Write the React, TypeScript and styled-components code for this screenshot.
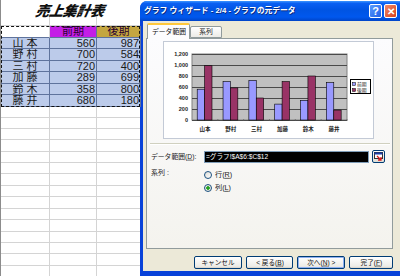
import * as React from 'react'
import styled, { createGlobalStyle } from 'styled-components'

const GlobalStyle = createGlobalStyle`
    body {
        margin: 0;
        font-family: "Liberation Sans", "Noto Sans CJK JP", sans-serif;
    }
`

// grid line positions of the sheet, taken row by row
const lines = [14, 25, 37, 48, 60, 71, 83, 94, 106, 117, 128, 139, 151, 162, 173, 185, 196, 208, 219, 231, 242, 253, 265, 276]
const heights = lines.map((y, i) => (i === 0 ? y + 1 : y - lines[i - 1]))
const colWidths = [49, 47, 44]

const rows = [
    { name: '山 本', a: 560, b: 987 },
    { name: '野 村', a: 700, b: 584 },
    { name: '三 村', a: 720, b: 400 },
    { name: '加 藤', a: 289, b: 699 },
    { name: '鈴 木', a: 358, b: 800 },
    { name: '藤 井', a: 680, b: 180 },
]

const Chart = () => {
    const plotX = 28
    const plotY = 12
    const plotW = 155
    const plotH = 66
    const catW = plotW / 6
    const scale = plotH / 1200
    const ticks = [1200, 1000, 800, 600, 400, 200, 0]

    return (
        <svg width="209" height="96" viewBox="0 0 209 96">
            <rect x={plotX} y={plotY} width={plotW} height={plotH} fill="#c0c0c0" stroke="#808080" strokeWidth="1" />
            {ticks.map((t, k) => (
                <g key={t}>
                    <line x1={plotX} x2={plotX + plotW} y1={plotY + k * 11 + 0.5} y2={plotY + k * 11 + 0.5} stroke="#4a4a4a" strokeWidth="1" />
                    <text x={24} y={plotY + k * 11 + 2} fontSize="5.5" textAnchor="end" fill="#222" fontFamily="Liberation Sans, sans-serif" fontWeight="bold">
                        {t.toLocaleString('en-US')}
                    </text>
                </g>
            ))}
            {rows.map((r, i) => {
                const x0 = plotX + i * catW + 5.2
                const ha = r.a * scale
                const hb = r.b * scale
                return (
                    <g key={r.name}>
                        <rect x={x0} y={plotY + plotH - ha} width={7.4} height={ha} fill="#9999ff" stroke="#000" strokeWidth="0.6" />
                        <rect x={x0 + 7.4} y={plotY + plotH - hb} width={7.4} height={hb} fill="#993366" stroke="#000" strokeWidth="0.6" />
                        <line x1={plotX + (i + 1) * catW} x2={plotX + (i + 1) * catW} y1={plotY + plotH - 1} y2={plotY + plotH + 1} stroke="#555" strokeWidth="0.6" />
                        <text x={plotX + i * catW + catW / 2} y={89} fontSize="5.5" textAnchor="middle" fill="#222" fontWeight="bold" fontFamily="Noto Sans CJK JP, sans-serif">
                            {r.name.replace(' ', '')}
                        </text>
                    </g>
                )
            })}
            <rect x="186.5" y="37.5" width="20" height="14" fill="#fff" stroke="#000" strokeWidth="1" />
            <rect x="188.5" y="40.5" width="3" height="3" fill="#9999ff" stroke="#000" strokeWidth="0.5" />
            <rect x="188.5" y="46.5" width="3" height="3" fill="#993366" stroke="#000" strokeWidth="0.5" />
            <text x="193" y="44" fontSize="4.8" fill="#222" fontFamily="Noto Sans CJK JP, sans-serif">前期</text>
            <text x="193" y="50" fontSize="4.8" fill="#222" fontFamily="Noto Sans CJK JP, sans-serif">後期</text>
        </svg>
    )
}

const RangeIcon = () => (
    <svg width="9" height="9" viewBox="0 0 9 9">
        <rect x="0.5" y="0.5" width="8" height="6" fill="#fff" stroke="#333" strokeWidth="1" />
        <rect x="0.5" y="0.5" width="8" height="2" fill="#1c3fa8" />
        <path d="M3 4 L7 8 M7 5 L7 8 L4 8" stroke="#d81b1b" strokeWidth="1.3" fill="none" />
    </svg>
)

export default () => (
    <>
        <GlobalStyle />
        <Screen>
            <Sheet>
                {heights.map((h, i) => {
                    if (i === 0) {
                        return (
                            <TitleRow key={i} h={h}>
                                <SheetTitle>売上集計表</SheetTitle>
                            </TitleRow>
                        )
                    }
                    if (i === 2) {
                        return (
                            <TableBox key={i}>
                                <SheetRow h={h}>
                                    <Cell w={colWidths[0]} tone="blank" />
                                    <Cell w={colWidths[1]} tone="purple" align="center">前期</Cell>
                                    <Cell w={colWidths[2]} tone="olive" align="center">後期</Cell>
                                </SheetRow>
                                {rows.map((r, k) => (
                                    <SheetRow key={r.name} h={heights[3 + k]}>
                                        <Cell w={colWidths[0]} tone="data" align="center">{r.name}</Cell>
                                        <Cell w={colWidths[1]} tone="data" align="right">{r.a}</Cell>
                                        <Cell w={colWidths[2]} tone="data" align="right">{r.b}</Cell>
                                    </SheetRow>
                                ))}
                            </TableBox>
                        )
                    }
                    if (i > 2 && i < 9) return null
                    return (
                        <SheetRow key={i} h={h}>
                            {colWidths.map((w, c) => <Cell key={c} w={w} />)}
                        </SheetRow>
                    )
                })}
            </Sheet>

            <Window>
                <TitleBar>
                    <TitleText>
                        <Txt s={0.78}>グラフ ウィザード - 2/4 - グラフの元データ</Txt>
                    </TitleText>
                    <CaptionButton kind="help">?</CaptionButton>
                    <CaptionButton kind="close">✕</CaptionButton>
                </TitleBar>
                <Body>
                    <Tabs>
                        <Tab active><Txt s={0.68} origin="center">データ範囲</Txt></Tab>
                        <Tab><Txt s={0.68} origin="center">系列</Txt></Tab>
                    </Tabs>
                    <Panel>
                        <ChartBox>
                            <Chart />
                        </ChartBox>
                        <Separator />
                        <FormRow>
                            <Label><Txt s={0.68}>データ範囲(<u>D</u>):</Txt></Label>
                            <RangeInput><Txt s={0.66}>=グラフ!$A$6:$C$12</Txt></RangeInput>
                            <RangeButton><RangeIcon /></RangeButton>
                        </FormRow>
                        <FormRow top={4}>
                            <Label><Txt s={0.7}>系列 :</Txt></Label>
                            <RadioGroup>
                                <RadioItem>
                                    <Radio />
                                    <Txt s={0.72}>行(<u>R</u>)</Txt>
                                </RadioItem>
                                <RadioItem>
                                    <Radio checked />
                                    <Txt s={0.72}>列(<u>L</u>)</Txt>
                                </RadioItem>
                            </RadioGroup>
                        </FormRow>
                    </Panel>
                    <ButtonRow>
                        <PushButton w={48}><Txt s={0.66} origin="center">キャンセル</Txt></PushButton>
                        <PushButton w={47}><Txt s={0.66} origin="center">&lt; 戻る(<u>B</u>)</Txt></PushButton>
                        <PushButton w={48} isDefault><Txt s={0.66} origin="center">次へ(<u>N</u>) &gt;</Txt></PushButton>
                        <PushButton w={44}><Txt s={0.66} origin="center">完了(<u>F</u>)</Txt></PushButton>
                    </ButtonRow>
                </Body>
            </Window>
        </Screen>
    </>
)

const Screen = styled.div`
    display: flex;
    width: 400px;
    height: 276px;
    overflow: hidden;
    background: #fff;
`

const Sheet = styled.div`
    display: flex;
    flex-direction: column;
    width: 140px;
    flex-shrink: 0;
    border-left: 1px solid #8c8c8c;
    box-sizing: border-box;
`

const TitleRow = styled.div<{ h: number }>`
    height: ${p => p.h}px;
    flex-shrink: 0;
    display: flex;
    justify-content: center;
`

const SheetTitle = styled.div`
    margin-top: 2px;
    font-family: "Noto Sans CJK JP", sans-serif;
    font-size: 14px;
    line-height: 16px;
    font-weight: 900;
    font-style: italic;
    letter-spacing: -0.3px;
    color: #111;
    transform: skewX(-10deg);
`

const SheetRow = styled.div<{ h: number }>`
    display: flex;
    height: ${p => p.h}px;
    flex-shrink: 0;
`

const toneBg: Record<string, string> = {
    blank: '#fff',
    purple: '#c41ee6',
    olive: '#c4a640',
    data: '#bccbea',
}

const Cell = styled.div<{ w: number; tone?: string; align?: string }>`
    width: ${p => p.w}px;
    flex-shrink: 0;
    box-sizing: border-box;
    border-right: 1px solid ${p => (p.tone && p.tone !== 'blank' ? '#5f739c' : '#d4d4d4')};
    border-bottom: 1px solid ${p => (p.tone ? '#5f739c' : '#d4d4d4')};
    background: ${p => toneBg[p.tone || 'blank']};
    text-align: ${p => p.align || 'left'};
    padding: 0 1px;
    font-family: "Liberation Sans", "Noto Sans CJK JP", sans-serif;
    font-size: 11px;
    line-height: 11px;
    color: ${p => (p.tone === 'purple' || p.tone === 'olive' ? '#2a0030' : '#1a1a1a')};
    white-space: nowrap;
    overflow: hidden;
`

const TableBox = styled.div`
    display: flex;
    flex-direction: column;
    outline: 1px dashed #111;
    outline-offset: -1px;
    position: relative;
    z-index: 1;
`

// small dialog text: the browser will not draw text under 10px, so scale it down
const Txt = styled.span<{ s: number; origin?: string }>`
    display: inline-block;
    font-size: 10px;
    line-height: 10px;
    white-space: nowrap;
    transform: scale(${p => p.s});
    transform-origin: ${p => p.origin || 'left center'};

    u {
        text-decoration: underline;
    }
`

const Window = styled.div`
    display: flex;
    flex-direction: column;
    width: 260px;
    height: 275px;
    margin-top: 1px;
    flex-shrink: 0;
    background: #0842d9;
    border-top-left-radius: 7px;
    overflow: hidden;
    font-family: "Liberation Sans", "Noto Sans CJK JP", sans-serif;
`

const TitleBar = styled.div`
    display: flex;
    align-items: center;
    gap: 2px;
    height: 20px;
    padding: 0 3px 0 4px;
    flex-shrink: 0;
    background: linear-gradient(to bottom, #3d95ff 0%, #0a5ff2 12%, #0054e3 45%, #0058ee 80%, #0044c8 100%);
`

const TitleText = styled.div`
    flex: 1;
    display: flex;
    align-items: center;
    color: #fff;
    font-weight: bold;
    white-space: nowrap;
    text-shadow: 1px 1px 0 #0a2a80;
    overflow: hidden;
`

const CaptionButton = styled.div<{ kind: 'help' | 'close' }>`
    width: 13px;
    height: 14px;
    box-sizing: border-box;
    border: 1px solid #fff;
    border-radius: 2px;
    display: flex;
    align-items: center;
    justify-content: center;
    color: #fff;
    font-size: ${p => (p.kind === 'help' ? '11px' : '10px')};
    font-weight: bold;
    background: ${p => (p.kind === 'help'
        ? 'linear-gradient(135deg, #5b9cff, #1f5fe6)'
        : 'linear-gradient(135deg, #f08a6a, #d6401c)')};
`

const Body = styled.div`
    flex: 1;
    display: flex;
    flex-direction: column;
    margin: 0 0 5px 3px;
    padding: 2px 7px 0 3px;
    background: #ece9d8;
`

const Tabs = styled.div`
    display: flex;
    align-items: flex-end;
    height: 15px;
    padding-left: 1px;
    position: relative;
    z-index: 1;
`

const Tab = styled.div<{ active?: boolean }>`
    display: flex;
    align-items: center;
    justify-content: center;
    height: ${p => (p.active ? 16 : 12)}px;
    width: ${p => (p.active ? 43 : 32)}px;
    box-sizing: border-box;
    margin-bottom: ${p => (p.active ? -1 : 0)}px;
    border: 1px solid #919b9c;
    border-bottom: ${p => (p.active ? 'none' : '1px solid #919b9c')};
    border-top: ${p => (p.active ? '2px solid #ffc83c' : '1px solid #919b9c')};
    border-radius: 2px 2px 0 0;
    background: ${p => (p.active ? '#fcfcfe' : 'linear-gradient(#fff, #ecebe6)')};
    color: #111;
`

const Panel = styled.div`
    display: flex;
    flex-direction: column;
    height: 211px;
    box-sizing: border-box;
    border: 1px solid #919b9c;
    background: linear-gradient(#fcfcfe, #f4f3ee);
    padding: 3px 0 0 17px;
`

const ChartBox = styled.div`
    width: 209px;
    height: 96px;
    background: #fff;
    box-shadow: 0 0 0 1px #c3cad6;
    display: flex;
`

const Separator = styled.div`
    height: 1px;
    margin: 5px 2px 0 -14px;
    background: #d0d0bf;
    border-bottom: 1px solid #fff;
`

const FormRow = styled.div<{ top?: number }>`
    display: flex;
    align-items: flex-start;
    margin: ${p => p.top ?? 6}px 0 0 -13px;
`

const Label = styled.div`
    width: 53px;
    height: 12px;
    flex-shrink: 0;
    display: flex;
    align-items: center;
    color: #222;
`

const RangeInput = styled.div`
    width: 165px;
    height: 12px;
    box-sizing: border-box;
    border: 1px solid #7f9db9;
    background: #000;
    color: #fff;
    padding-left: 1px;
    display: flex;
    align-items: center;
    overflow: hidden;
`

const RangeButton = styled.div`
    width: 13px;
    height: 13px;
    margin: -1px 0 0 3px;
    box-sizing: border-box;
    border: 1px solid #003c74;
    border-radius: 2px;
    background: linear-gradient(#fff, #dcdcd4);
    display: flex;
    align-items: center;
    justify-content: center;
`

const RadioGroup = styled.div`
    display: flex;
    flex-direction: column;
    gap: 1px;
    margin-top: 2px;
`

const RadioItem = styled.div`
    display: flex;
    align-items: center;
    gap: 3px;
    height: 12px;
    color: #222;
`

const Radio = styled.span<{ checked?: boolean }>`
    width: 8px;
    height: 8px;
    flex-shrink: 0;
    box-sizing: border-box;
    border: 1px solid #1c5180;
    border-radius: 50%;
    background: ${p => (p.checked
        ? 'radial-gradient(circle, #21a121 0 1.5px, #e8e8e2 2px)'
        : 'linear-gradient(135deg, #dcdcd6, #fff)')};
`

const ButtonRow = styled.div`
    display: flex;
    justify-content: flex-end;
    gap: 4px;
    margin-top: 7px;
`

const PushButton = styled.div<{ w: number; isDefault?: boolean }>`
    display: flex;
    align-items: center;
    justify-content: center;
    width: ${p => p.w}px;
    height: 13px;
    box-sizing: border-box;
    border: 1px solid #003c74;
    border-radius: 2px;
    background: linear-gradient(#fff, #ecebe6 85%, #d6d0c5);
    box-shadow: ${p => (p.isDefault ? 'inset 0 0 0 1px #8eb0f0' : 'none')};
    color: #111;
`
